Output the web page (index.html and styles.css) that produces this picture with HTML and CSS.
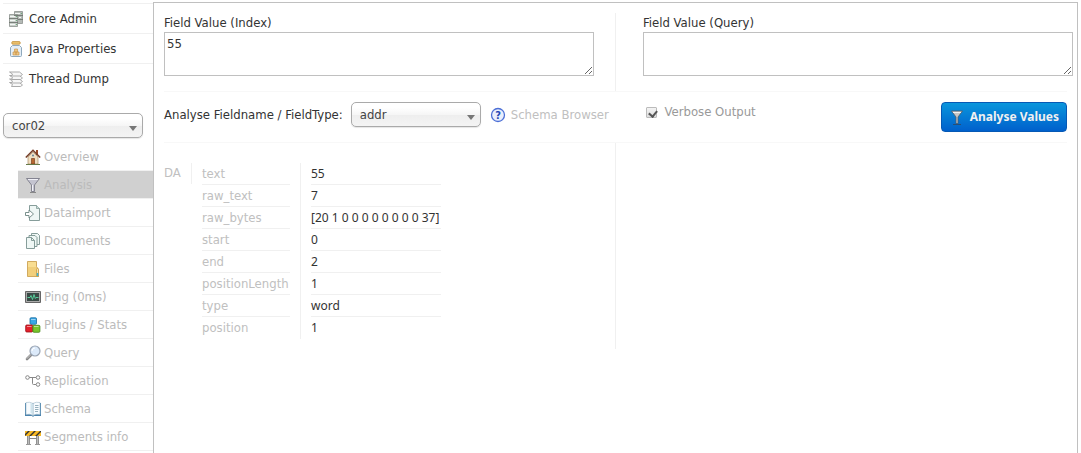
FILE: index.html
```html
<!DOCTYPE html>
<html lang="en">
<head>
  <meta charset="UTF-8">
  <title>Solr Admin</title>
  <link rel="stylesheet" href="styles.css">
</head>
<body>
  <div class="wrapper">
    <nav class="sidebar">
      <ul class="menu">
        <li><a href="#">
          <svg class="icon" viewBox="0 0 16 16"><g stroke="#8b918d" stroke-width=".8"><path fill="#b4bab6" d="M6.500 .5h8v12h-8z"/><path fill="#c9d0cb" d="M1.500 3.500h8v12h-8z"/></g><path stroke="#6f7671" stroke-width=".9" d="M6 4.500h9M10 8.500h5M1 7.500h9M1 11.500h9"/><path stroke="#f4f7f5" d="M7 2.500h5M11 6.500h2M2 5.500h5M2 9.500h5M2 13.500h5"/><path stroke="#6cab7d" d="M8 5.500h1M8 9.500h1M8 13.500h1M13 2.500h1"/></svg>
          Core Admin</a></li>
        <li><a href="#">
          <svg class="icon" viewBox="0 0 16 16"><path fill="#e4eef7" stroke="#8fa9bd" d="M4.500 4.500h7l2 2v8q0 1-1 1h-9q-1 0-1-1v-8z"/><rect x="3.800" y=".6" width="8.400" height="2.600" rx="1" fill="#edc470" stroke="#c08d38" stroke-width=".8"/><path fill="#eec681" stroke="#cc9a50" stroke-width=".7" d="M5 11h3v3H5zM8 11h3v3H8zM6.500 8h3v3h-3z"/></svg>
          Java Properties</a></li>
        <li><a href="#">
          <svg class="icon" viewBox="0 0 16 16"><g fill="#f7f7f7" stroke="#a2a2a2" stroke-width=".9"><path d="M1.500 11.500h10l3 2.500-2 1.500h-9l1-2z"/><path d="M1.500 8h10l3 2.500-2 1.500h-9l1-2z"/><path d="M1.500 4.500h10l3 2.500-2 1.500h-9l1-2z"/><path d="M1.500 1h10l3 2.500-2 1.500h-9l1-2z"/></g></svg>
          Thread Dump</a></li>
      </ul>

      <div class="select core-select">
        <select aria-label="Core selector"><option>cor02</option></select>
      </div>

      <ul class="submenu">
        <li><a href="#">
          <svg class="icon" viewBox="0 0 16 16"><path fill="#9b4a28" d="M11 1h2v5h-2z"/><path fill="#f0dfc2" stroke="#a98d69" stroke-width=".7" d="M3 8l5-5 5 5v7H3z"/><path fill="none" stroke="#743c25" stroke-width="1.500" d="M.8 8.500L8 1.300l7.200 7.200"/><path fill="#b8672f" stroke="#6c3114" stroke-width=".6" d="M6.500 9.500h3V15h-3z"/><circle cx="8" cy="6.500" r="1" fill="#62839a"/><path stroke="#677b4a" d="M1 15.500h14"/></svg>
          Overview</a></li>
        <li class="active"><a href="#">
          <svg class="icon" viewBox="0 0 16 16"><path fill="#c4c4d0" stroke="#727280" stroke-width=".8" d="M1.500 1.500h13L9.500 8v6.500h-3V8z"/><path stroke="#f1f1f7" d="M3 2.500h10M7.500 8v6"/><path stroke="#888" d="M5 15.500h6"/></svg>
          Analysis</a></li>
        <li><a href="#">
          <svg class="icon" viewBox="0 0 16 16"><path fill="#eff7f5" stroke="#78928e" stroke-width=".9" d="M4.500 .5h7l3 3v12h-10z"/><path fill="#c8dcd8" stroke="#78928e" stroke-width=".7" d="M11.500 .5v3h3"/><path fill="#fff" stroke="#6b8580" stroke-width=".9" d="M.5 7.500H4V5l4.500 4L4 13v-2.500H.5z"/></svg>
          Dataimport</a></li>
        <li><a href="#">
          <svg class="icon" viewBox="0 0 16 16"><g fill="#eff7f5" stroke="#78928e" stroke-width=".9"><path d="M6.500 .5h6l2 2v9h-8z"/><path d="M4 2.500h6l2 2v9H4z"/><path d="M1.500 4.500h5l3 3v8h-8zM6.500 4.500v3h3"/></g></svg>
          Documents</a></li>
        <li><a href="#">
          <svg class="icon" viewBox="0 0 16 16"><path fill="#f1cf7b" stroke="#c69b47" stroke-width=".8" d="M2.500 .5h9v5l2 3v7h-11z"/><path fill="#ffe7a2" d="M3 1h8v5H3z" opacity=".6"/><path fill="#f9e4a8" stroke="#c69b47" stroke-width=".8" d="M11.500 15.500V8.500q0-1 1-1t1 1v7z"/><path stroke="#3bb5d8" stroke-width="1.500" d="M12.500 12v3"/></svg>
          Files</a></li>
        <li><a href="#">
          <svg class="icon" viewBox="0 0 16 16"><path fill="#aaa" stroke="#666" d="M.5 2.500h15v11H.5z"/><path fill="#3a4a46" d="M2 4h12v8H2z"/><path fill="none" stroke="#5bdba4" stroke-width=".9" d="M2.500 8.500H5l1-2 1.500 4 1.500-5 1.300 4 .7-1h2.500"/></svg>
          Ping (0ms)</a></li>
        <li><a href="#">
          <svg class="icon" viewBox="0 0 16 16"><g stroke-width=".8"><rect x="5" y=".8" width="6.500" height="6.500" rx="1" fill="#38a7e6" stroke="#176b9f"/><rect x=".7" y="8" width="7" height="7" rx="1" fill="#e3202b" stroke="#9a0c15"/><rect x="7.900" y="8.300" width="7" height="7" rx="1" fill="#79c52b" stroke="#438613"/></g><path stroke="#fff" opacity=".5" d="M6 2.500h4.500M2 9.500h4.500M9 9.500h4.500"/></svg>
          Plugins / Stats</a></li>
        <li><a href="#">
          <svg class="icon" viewBox="0 0 16 16"><path stroke="#888" stroke-width="2.600" stroke-linecap="round" d="M2 14l4-4"/><path stroke="#ccc" stroke-linecap="round" d="M2 13.500l4-4"/><circle cx="10" cy="6" r="5" fill="#dceafa" stroke="#9aa5b4" stroke-width="1.200"/><path fill="none" stroke="#fff" d="M7 6q0-3 3-3"/></svg>
          Query</a></li>
        <li><a href="#">
          <svg class="icon" viewBox="0 0 16 16"><g fill="#fff" stroke="#888"><path fill="none" d="M4 4.500h7M7.500 4.500v6q0 1 1 1h2.500"/><circle cx="2.500" cy="4.500" r="1.800"/><circle cx="13" cy="4.500" r="1.800"/><circle cx="13" cy="11.500" r="1.800"/></g></svg>
          Replication</a></li>
        <li><a href="#">
          <svg class="icon" viewBox="0 0 16 16"><path fill="#4b83ad" d="M0 2h16v13H9l-1 1-1-1H0z"/><path fill="#f8fcff" stroke="#9eb9c9" stroke-width=".6" d="M1 1.500q4-1 7 1v12q-3-2-7-1zM15 1.500q-4-1-7 1v12q3-2 7-1z"/><path fill="#cfe4ed" d="M5.500 2q1 0 2 1v10l-2-1z"/><path stroke="#7c9cac" stroke-width=".8" d="M10 4.500h3.500M10 6.500h3.500M10 8.500h3.500M10 10.500h3"/></svg>
          Schema</a></li>
        <li><a href="#">
          <svg class="icon" viewBox="0 0 16 16"><path fill="#bbb" stroke="#707070" stroke-width=".7" d="M2.500 6h2v9.500h-2zM11.500 6h2v9.500h-2z"/><path stroke="#888" d="M4 9.500h8"/><path fill="#f8b923" d="M0 2h16v5H0z"/><path fill="#333" d="M0 5l3-3h2L0 7zM4 7l5-5h2L6 7zM10 7l5-5h1v1l-4 4z"/><path fill="#999" d="M1 15h5v1H1zM10 15h5v1h-5z"/></svg>
          Segments info</a></li>
      </ul>
    </nav>

    <main class="content">
      <form>
        <div class="fields">
          <div class="field">
            <label for="index-value">Field Value (Index)</label>
            <textarea id="index-value">55</textarea>
          </div>
          <div class="field">
            <label for="query-value">Field Value (Query)</label>
            <textarea id="query-value"></textarea>
          </div>
        </div>

        <div class="options">
          <div class="type">
            <label for="type-or-name">Analyse Fieldname / FieldType:</label>
            <div class="select type-select">
              <select id="type-or-name"><option>addr</option></select>
            </div>
            <a class="schema-link" href="#">
              <svg class="icon" viewBox="0 0 16 16"><circle cx="8" cy="8" r="6.500" fill="#e9effc" stroke="#4c6fd6" stroke-width="1.300"/><text x="8" y="12" text-anchor="middle" font-size="11" font-weight="bold" fill="#2748b5">?</text></svg>
              Schema Browser</a>
          </div>
          <div class="run">
            <label class="verbose"><input type="checkbox" checked>Verbose Output</label>
            <button type="submit">
              <svg class="icon" viewBox="0 0 16 16"><path fill="#c6c6c6" stroke="#4b5b6b" stroke-width=".8" d="M2.500 2h11L9 8v6.500H7V8z"/><path stroke="#f2f2f2" d="M4 3.500h8"/><path stroke="#264e78" d="M4 15.500h8"/></svg>
              Analyse Values
            </button>
          </div>
        </div>
      </form>

      <div class="result">
        <div class="index-result">
          <abbr class="analyzer">DA</abbr>
          <table>
            <tr><th>text</th><td>55</td></tr>
            <tr><th>raw_text</th><td>7</td></tr>
            <tr><th>raw_bytes</th><td>[20 1 0 0 0 0 0 0 0 0 37]</td></tr>
            <tr><th>start</th><td>0</td></tr>
            <tr><th>end</th><td>2</td></tr>
            <tr><th>positionLength</th><td>1</td></tr>
            <tr><th>type</th><td>word</td></tr>
            <tr><th>position</th><td>1</td></tr>
          </table>
        </div>
        <div class="query-result"></div>
      </div>
    </main>
  </div>
</body>
</html>
```

FILE: styles.css
```css
* {
  box-sizing: border-box;
}
body {
  margin: 0;
  background-color: #fff;
  color: #333;
  font-family: "DejaVu Sans Condensed", "DejaVu Sans", sans-serif;
  font-stretch: condensed;
  font-size: 13px;
  line-height: 20px;
}
a {
  color: #333;
  text-decoration: none;
}
ul {
  list-style: none;
  margin: 0;
  padding: 0;
}
.wrapper {
  display: flex;
  min-height: 100vh;
  padding: 2px 3px 0;
}
.icon {
  width: 16px;
  height: 16px;
  flex: none;
}

/* sidebar */
.sidebar {
  width: 150px;
  flex: none;
  padding-top: 1px;
}
.menu a {
  display: flex;
  align-items: center;
  gap: 5px;
  height: 30px;
  padding-left: 5px;
  border-top: 1px solid #f0f0f0;
}
.core-select {
  width: 140px;
  margin: 20px 0 5px;
}
.submenu {
  margin-left: 15px;
}
.submenu a {
  display: flex;
  align-items: center;
  gap: 3px;
  height: 28px;
  padding-left: 7px;
  border-bottom: 1px solid #f0f0f0;
  color: #bbb;
}
.submenu .active a {
  background-color: #d0d0d0;
}

/* drop-downs */
.select {
  position: relative;
}
.select::after {
  content: "";
  position: absolute;
  right: 6px;
  top: 13px;
  border: 4px solid transparent;
  border-top: 5px solid #777;
  pointer-events: none;
}
select {
  appearance: none;
  display: block;
  width: 100%;
  height: 25px;
  padding: 0 20px 0 8px;
  border: 1px solid #aaa;
  border-radius: 5px;
  background: linear-gradient(#fff 20%, #f6f6f6 50%, #eee 52%, #f4f4f4);
  box-shadow: 0 1px 1px rgba(0, 0, 0, 0.1);
  color: #444;
  font: inherit;
}

/* content */
.content {
  flex: 1;
  min-width: 0;
  border: 1px solid #c0c0c0;
  border-bottom: 0;
  padding: 10px 4px 0 10px;
}
.fields {
  display: flex;
  height: 78px;
}
.field {
  flex: 1 1 0;
  box-sizing: content-box;
}
.field:first-child {
  padding-right: 21px;
  border-right: 1px solid #f0f0f0;
}
.field:last-child {
  padding-left: 27px;
}
.field label {
  display: block;
  height: 19px;
}
textarea {
  display: block;
  width: 100%;
  height: 44px;
  padding: 1px 2px;
  border: 1px solid #c0c0c0;
  color: #333;
  font: inherit;
}
.options {
  display: grid;
  grid-template-columns: 1fr 1fr;
  height: 52px;
  margin-right: 6px;
  padding-top: 10px;
  border: 1px solid #f8f8f8;
  border-width: 1px 0;
}
.type {
  display: flex;
  align-items: center;
  align-self: start;
  white-space: nowrap;
}
.type-select {
  width: 130px;
  margin: 0 9px 0 8px;
}
.schema-link {
  display: flex;
  align-items: center;
  gap: 5px;
  color: #c0c0c0;
}
.run {
  display: flex;
  justify-content: space-between;
  align-items: flex-start;
  padding-left: 30px;
}
.verbose {
  display: flex;
  align-items: center;
  gap: 8px;
  color: #999;
}
input[type="checkbox"] {
  appearance: none;
  position: relative;
  width: 11px;
  height: 11px;
  margin: 0;
  border: 1px solid #bbb;
  border-radius: 1px;
  background: linear-gradient(#f4f4f4, #ddd);
}
input[type="checkbox"]:checked::after {
  content: "";
  position: absolute;
  left: 3px;
  top: 1px;
  width: 4px;
  height: 6px;
  border: solid #555;
  border-width: 0 2px 2px 0;
  transform: rotate(40deg);
}
button {
  display: flex;
  align-items: center;
  gap: 5px;
  height: 30px;
  padding: 0 7px;
  border: 1px solid #0659b5;
  border-radius: 4px;
  background: linear-gradient(#0a96dc, #0060cc);
  color: #f0f0f0;
  font-family: "Noto Sans", sans-serif;
  font-size: 12px;
  font-weight: bold;
  line-height: 20px;
  white-space: nowrap;
  cursor: pointer;
}

/* analysis result */
.result {
  display: grid;
  grid-template-columns: 1fr 1fr;
  margin-right: 6px;
}
.index-result {
  display: flex;
  align-items: flex-start;
  padding: 20px 0 10px;
  border-right: 1px solid #f0f0f0;
}
.analyzer {
  width: 28px;
  height: 21px;
  border-right: 1px solid #f0f0f0;
  color: #c0c0c0;
}
table {
  border-collapse: separate;
  border-spacing: 0;
  margin-left: 10px;
}
th, td {
  position: relative;
  height: 22px;
  padding: 0;
  text-align: left;
  font-weight: normal;
  white-space: nowrap;
}
th {
  min-width: 99px;
  padding-right: 10px;
  border-right: 1px solid #f0f0f0;
  color: #c0c0c0;
}
td {
  min-width: 140px;
  padding-left: 10px;
  font-family: "Noto Sans", sans-serif;
  font-size: 12px;
}
/* row lines stop short of the column line */
tr:not(:last-child) th::after,
tr:not(:last-child) td::after {
  content: "";
  position: absolute;
  left: 0;
  right: 10px;
  bottom: 0;
  height: 1px;
  background-color: #f0f0f0;
}
tr:not(:last-child) td::after {
  left: 10px;
  right: 0;
}
```
